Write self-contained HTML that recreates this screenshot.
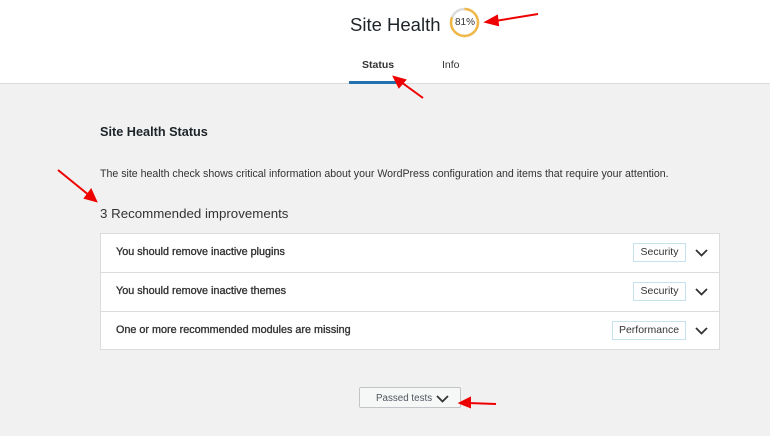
<!DOCTYPE html><html><head><style>
*{margin:0;padding:0;box-sizing:border-box}
body{width:770px;height:436px;background:#f1f1f1;font-family:"Liberation Sans",sans-serif;color:#1d2327;position:relative;overflow:hidden}
.hdr{position:absolute;left:0;top:0;width:770px;height:84px;background:#fff;border-bottom:1px solid #dcdcde}
.a{position:absolute;white-space:nowrap}
.box{position:absolute;left:100px;top:233px;width:620px;height:117px;background:#fff;border:1px solid #dcdcde}
.row{position:absolute;left:0;width:618px;height:39px;border-bottom:1px solid #dcdcde}
.row span.t{position:absolute;left:15px;top:12px;font-size:10.8px;color:#333;-webkit-text-stroke:0.35px #333}
.badge{position:absolute;top:9px;height:19px;border:1px solid #c5e2ee;font-size:10.5px;line-height:17px;text-align:center;color:#333}
.chev{position:absolute;left:594px;top:15px}
</style></head><body>
<div class="hdr"></div>
<div class="a" style="left:350px;top:14px;font-size:18.5px;color:#1d2327">Site Health</div>
<svg class="a" style="left:449px;top:7px" width="31" height="31"><circle cx="15.5" cy="15.5" r="13.5" fill="none" stroke="#dcdcde" stroke-width="2.5"/><circle cx="15.5" cy="15.5" r="13.5" fill="none" stroke="#f0b849" stroke-width="2.5" stroke-dasharray="68.7 84.8" transform="rotate(-90 15.5 15.5)" /></svg>
<div class="a" style="left:455px;top:17px;font-size:10px;color:#333">81%</div>
<div class="a" style="left:362px;top:59px;font-size:10.5px;font-weight:bold;color:#333">Status</div>
<div class="a" style="left:442px;top:59px;font-size:10.5px;color:#333">Info</div>
<div class="a" style="left:349px;top:81px;width:52px;height:3px;background:#2271b1"></div>
<div class="a" style="left:100px;top:125px;font-size:12.7px;font-weight:bold">Site Health Status</div>
<div class="a" style="left:100px;top:168px;font-size:10.6px;color:#333">The site health check shows critical information about your WordPress configuration and items that require your attention.</div>
<div class="a" style="left:100px;top:206px;font-size:13.3px;color:#333">3 Recommended improvements</div>
<div class="box">
<div class="row" style="top:0"><span class="t">You should remove inactive plugins</span><div class="badge" style="left:532px;width:53px">Security</div><svg class="chev" width="13" height="8"><path d="M1 1l5.5 5.5 5.5-5.5" fill="none" stroke="#333" stroke-width="1.8"/></svg></div>
<div class="row" style="top:39px"><span class="t">You should remove inactive themes</span><div class="badge" style="left:532px;width:53px">Security</div><svg class="chev" width="13" height="8"><path d="M1 1l5.5 5.5 5.5-5.5" fill="none" stroke="#333" stroke-width="1.8"/></svg></div>
<div class="row" style="top:78px;border:0"><span class="t">One or more recommended modules are missing</span><div class="badge" style="left:511px;width:74px">Performance</div><svg class="chev" width="13" height="8"><path d="M1 1l5.5 5.5 5.5-5.5" fill="none" stroke="#333" stroke-width="1.8"/></svg></div>
</div>
<div class="a" style="left:359px;top:387px;width:102px;height:21px;background:#f6f7f7;border:1px solid #c3c4c7;border-radius:2px"></div>
<div class="a" style="left:376px;top:393px;font-size:9.8px;color:#50575e">Passed tests</div>
<svg class="a" style="left:436px;top:395px" width="13" height="8"><path d="M1 1l5.5 5.5 5.5-5.5" fill="none" stroke="#333" stroke-width="1.8"/></svg>
<svg class="a" style="left:0;top:0" width="770" height="436">
<g stroke="#e00" stroke-width="2" fill="#e00">
<line x1="538" y1="14" x2="495" y2="21"/><polygon points="486,22 497,16 498,25"/>
<line x1="423" y1="98" x2="401" y2="82"/><polygon points="394,77 405,80 399,87"/>
<line x1="58" y1="170" x2="90" y2="196"/><polygon points="96,201 85,198 91,190"/>
<line x1="496" y1="404" x2="468" y2="403"/><polygon points="460,403 470,398 470,407"/>
</g></svg>
</body></html>
